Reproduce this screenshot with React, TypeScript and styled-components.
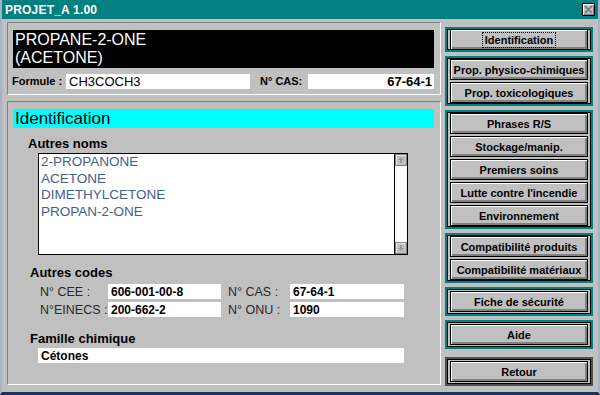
import styled, { createGlobalStyle } from 'styled-components';

const GlobalStyle = createGlobalStyle`
  html, body {
    margin: 0;
    padding: 0;
    background: #c0c0c0;
  }
  body {
    font-family: "Liberation Sans", Arial, sans-serif;
  }
`;

const Window = styled.div`
  width: 600px;
  height: 395px;
  box-sizing: border-box;
  background: #c0c0c0;
  border-left: 2px solid #a4b4c4;
  border-right: 2px solid #a4b4c4;
  border-bottom: 3px solid #1c3358;
  display: flex;
  flex-direction: column;
  overflow: hidden;
`;

const TitleBar = styled.div`
  height: 19px;
  flex: none;
  background: #008080;
  display: flex;
  align-items: center;
  justify-content: space-between;
  padding: 0 3px 0 3px;
`;

const TitleText = styled.span`
  color: #fff;
  font-weight: bold;
  font-size: 12px;
  letter-spacing: 0.2px;
`;

const CloseButton = styled.div`
  width: 13px;
  height: 13px;
  box-sizing: border-box;
  background: #c0c0c0;
  border: 1px solid #000;
  box-shadow: inset 1px 1px 0 #fff, inset -1px -1px 0 #808080;
  display: flex;
  align-items: center;
  justify-content: center;
`;

const Body = styled.div`
  flex: 1;
  display: flex;
  padding: 3px 0 0 5px;
`;

const LeftColumn = styled.div`
  width: 434px;
  display: flex;
  flex-direction: column;
  gap: 6px;
`;

const Panel = styled.div<{ $height: number }>`
  height: ${(p) => p.$height}px;
  box-sizing: border-box;
  border-top: 1px solid #808080;
  border-left: 1px solid #808080;
  border-bottom: 1px solid #fff;
  border-right: 1px solid #fff;
  padding: 7px 6px 0 5px;
`;

const NameBox = styled.div`
  height: 38px;
  box-sizing: border-box;
  background: #000;
  color: #fff;
  font-size: 16px;
  line-height: 18px;
  padding: 1px 2px;
`;

const FormRow = styled.div`
  margin-top: 6px;
  display: flex;
  align-items: center;
  height: 14px;
`;

const BoldLabel = styled.span<{ $width: number; $indent?: number }>`
  width: ${(p) => p.$width}px;
  margin-left: ${(p) => p.$indent ?? 0}px;
  flex: none;
  font-size: 11px;
  font-weight: bold;
  color: #000;
`;

const Field = styled.div<{ $width?: number; $align?: string; $bold?: boolean; $size?: number }>`
  width: ${(p) => (p.$width ? `${p.$width}px` : 'auto')};
  flex: ${(p) => (p.$width ? 'none' : '1')};
  height: 15px;
  box-sizing: border-box;
  background: #fff;
  display: flex;
  align-items: center;
  justify-content: ${(p) => p.$align ?? 'flex-start'};
  padding: 0 2px 0 3px;
  font-size: ${(p) => p.$size ?? 12}px;
  font-weight: ${(p) => (p.$bold ? 'bold' : 'normal')};
  color: #000;
  white-space: nowrap;
`;

const SectionBar = styled.div`
  height: 19px;
  background: #00ffff;
  color: #000;
  font-size: 17px;
  line-height: 19px;
  padding-left: 2px;
`;

const SectionLabel = styled.div<{ $top: number; $indent: number }>`
  margin-top: ${(p) => p.$top}px;
  margin-left: ${(p) => p.$indent}px;
  font-size: 13px;
  line-height: 15px;
  font-weight: bold;
  color: #000;
`;

const ListBox = styled.div`
  margin-top: 2px;
  margin-left: 25px;
  width: 370px;
  height: 102px;
  box-sizing: border-box;
  background: #fff;
  border: 1px solid #000;
  display: flex;
`;

const ListItems = styled.div`
  flex: 1;
  padding: 0 0 0 2px;
`;

const ListItem = styled.div`
  font-size: 13.5px;
  line-height: 16.5px;
  color: #46608a;
`;

const ScrollBar = styled.div`
  width: 12px;
  border-left: 1px solid #000;
  display: flex;
  flex-direction: column;
  justify-content: space-between;
`;

const ScrollArrow = styled.div`
  width: 12px;
  height: 12px;
  box-sizing: border-box;
  background: #c0c0c0;
  border: 1px solid #808080;
  box-shadow: inset 1px 1px 0 #e8e8e8;
  display: flex;
  align-items: center;
  justify-content: center;
`;

const CodeRow = styled.div<{ $top: number }>`
  margin-top: ${(p) => p.$top}px;
  margin-left: 27px;
  display: flex;
  align-items: center;
  height: 15px;
`;

const CodeLabel = styled.span<{ $width: number; $gap?: number }>`
  width: ${(p) => p.$width}px;
  margin-left: ${(p) => p.$gap ?? 0}px;
  flex: none;
  font-size: 12.5px;
  color: #2a2a2a;
  white-space: nowrap;
`;

const FamilyField = styled.div`
  margin: 2px 0 0 25px;
  width: 366px;
`;

const RightColumn = styled.div`
  width: 148px;
  margin-left: 4px;
  padding-top: 5px;
  display: flex;
  flex-direction: column;
  gap: 4px;
`;

const Group = styled.div<{ $pad: number; $dark?: boolean; $extraTop?: number }>`
  border: 2px solid ${(p) => (p.$dark ? '#505050' : '#008080')};
  box-shadow: inset 0 0 0 1px #000;
  padding: ${(p) => p.$pad}px 3px;
  margin-top: ${(p) => p.$extraTop ?? 0}px;
  display: flex;
  flex-direction: column;
  gap: 2px;
`;

const Button = styled.button`
  height: 21px;
  width: 100%;
  box-sizing: border-box;
  background: #c0c0c0;
  border: 1px solid #000;
  box-shadow: inset 1px 1px 0 #fff, inset -2px -2px 0 #808080;
  font-family: "Liberation Sans", Arial, sans-serif;
  font-size: 11px;
  font-weight: bold;
  color: #000;
  padding: 0;
  display: flex;
  align-items: center;
  justify-content: center;
  white-space: nowrap;
`;

const FocusText = styled.span`
  outline: 1px dotted #000;
  outline-offset: 1px;
  padding: 0 1px;
  line-height: 12px;
`;

const upArrow = (
  <svg width="8" height="8" viewBox="0 0 8 8">
    <path d="M4 1 L1 4 H3 V7 H5 V4 H7 Z" fill="#9a9a9a" />
  </svg>
);

const downArrow = (
  <svg width="8" height="8" viewBox="0 0 8 8">
    <path d="M4 7 L1 4 H3 V1 H5 V4 H7 Z" fill="#9a9a9a" />
  </svg>
);

const otherNames = ['2-PROPANONE', 'ACETONE', 'DIMETHYLCETONE', 'PROPAN-2-ONE'];

export default function App() {
  return (
    <>
      <GlobalStyle />
      <Window>
        <TitleBar>
          <TitleText>PROJET_A 1.00</TitleText>
          <CloseButton>
            <svg width="9" height="9" viewBox="0 0 9 9">
              <path d="M1 1 L8 8 M8 1 L1 8" stroke="#6a7a8a" strokeWidth="1.6" />
            </svg>
          </CloseButton>
        </TitleBar>

        <Body>
          <LeftColumn>
            <Panel $height={73}>
              <NameBox>
                PROPANE-2-ONE
                <br />
                (ACETONE)
              </NameBox>
              <FormRow>
                <BoldLabel $width={54} $indent={-1}>Formule :</BoldLabel>
                <Field $width={184} $size={13}>CH3COCH3</Field>
                <BoldLabel $width={48} $indent={10}>N° CAS:</BoldLabel>
                <Field $align="flex-end" $bold $size={13}>67-64-1</Field>
              </FormRow>
            </Panel>

            <Panel $height={284}>
              <SectionBar>Identification</SectionBar>

              <SectionLabel $top={8} $indent={15}>Autres noms</SectionLabel>
              <ListBox>
                <ListItems>
                  {otherNames.map((name) => (
                    <ListItem key={name}>{name}</ListItem>
                  ))}
                </ListItems>
                <ScrollBar>
                  <ScrollArrow>{upArrow}</ScrollArrow>
                  <ScrollArrow>{downArrow}</ScrollArrow>
                </ScrollBar>
              </ListBox>

              <SectionLabel $top={10} $indent={17}>Autres codes</SectionLabel>
              <CodeRow $top={4}>
                <CodeLabel $width={68}>N° CEE :</CodeLabel>
                <Field $width={113} $bold>606-001-00-8</Field>
                <CodeLabel $width={62} $gap={7}>N° CAS :</CodeLabel>
                <Field $width={114} $bold>67-64-1</Field>
              </CodeRow>
              <CodeRow $top={3}>
                <CodeLabel $width={68}>N°EINECS :</CodeLabel>
                <Field $width={113} $bold>200-662-2</Field>
                <CodeLabel $width={62} $gap={7}>N° ONU :</CodeLabel>
                <Field $width={114} $bold>1090</Field>
              </CodeRow>

              <SectionLabel $top={14} $indent={17}>Famille chimique</SectionLabel>
              <FamilyField>
                <Field $bold>Cétones</Field>
              </FamilyField>
            </Panel>
          </LeftColumn>

          <RightColumn>
            <Group $pad={0}>
              <Button>
                <FocusText>Identification</FocusText>
              </Button>
            </Group>
            <Group $pad={1}>
              <Button>Prop. physico-chimiques</Button>
              <Button>Prop. toxicologiques</Button>
            </Group>
            <Group $pad={1}>
              <Button>Phrases R/S</Button>
              <Button>Stockage/manip.</Button>
              <Button>Premiers soins</Button>
              <Button>Lutte contre l'incendie</Button>
              <Button>Environnement</Button>
            </Group>
            <Group $pad={1}>
              <Button>Compatibilité produits</Button>
              <Button>Compatibilité matériaux</Button>
            </Group>
            <Group $pad={2}>
              <Button>Fiche de sécurité</Button>
            </Group>
            <Group $pad={2}>
              <Button>Aide</Button>
            </Group>
            <Group $pad={2} $dark $extraTop={4}>
              <Button>Retour</Button>
            </Group>
          </RightColumn>
        </Body>
      </Window>
    </>
  );
}
